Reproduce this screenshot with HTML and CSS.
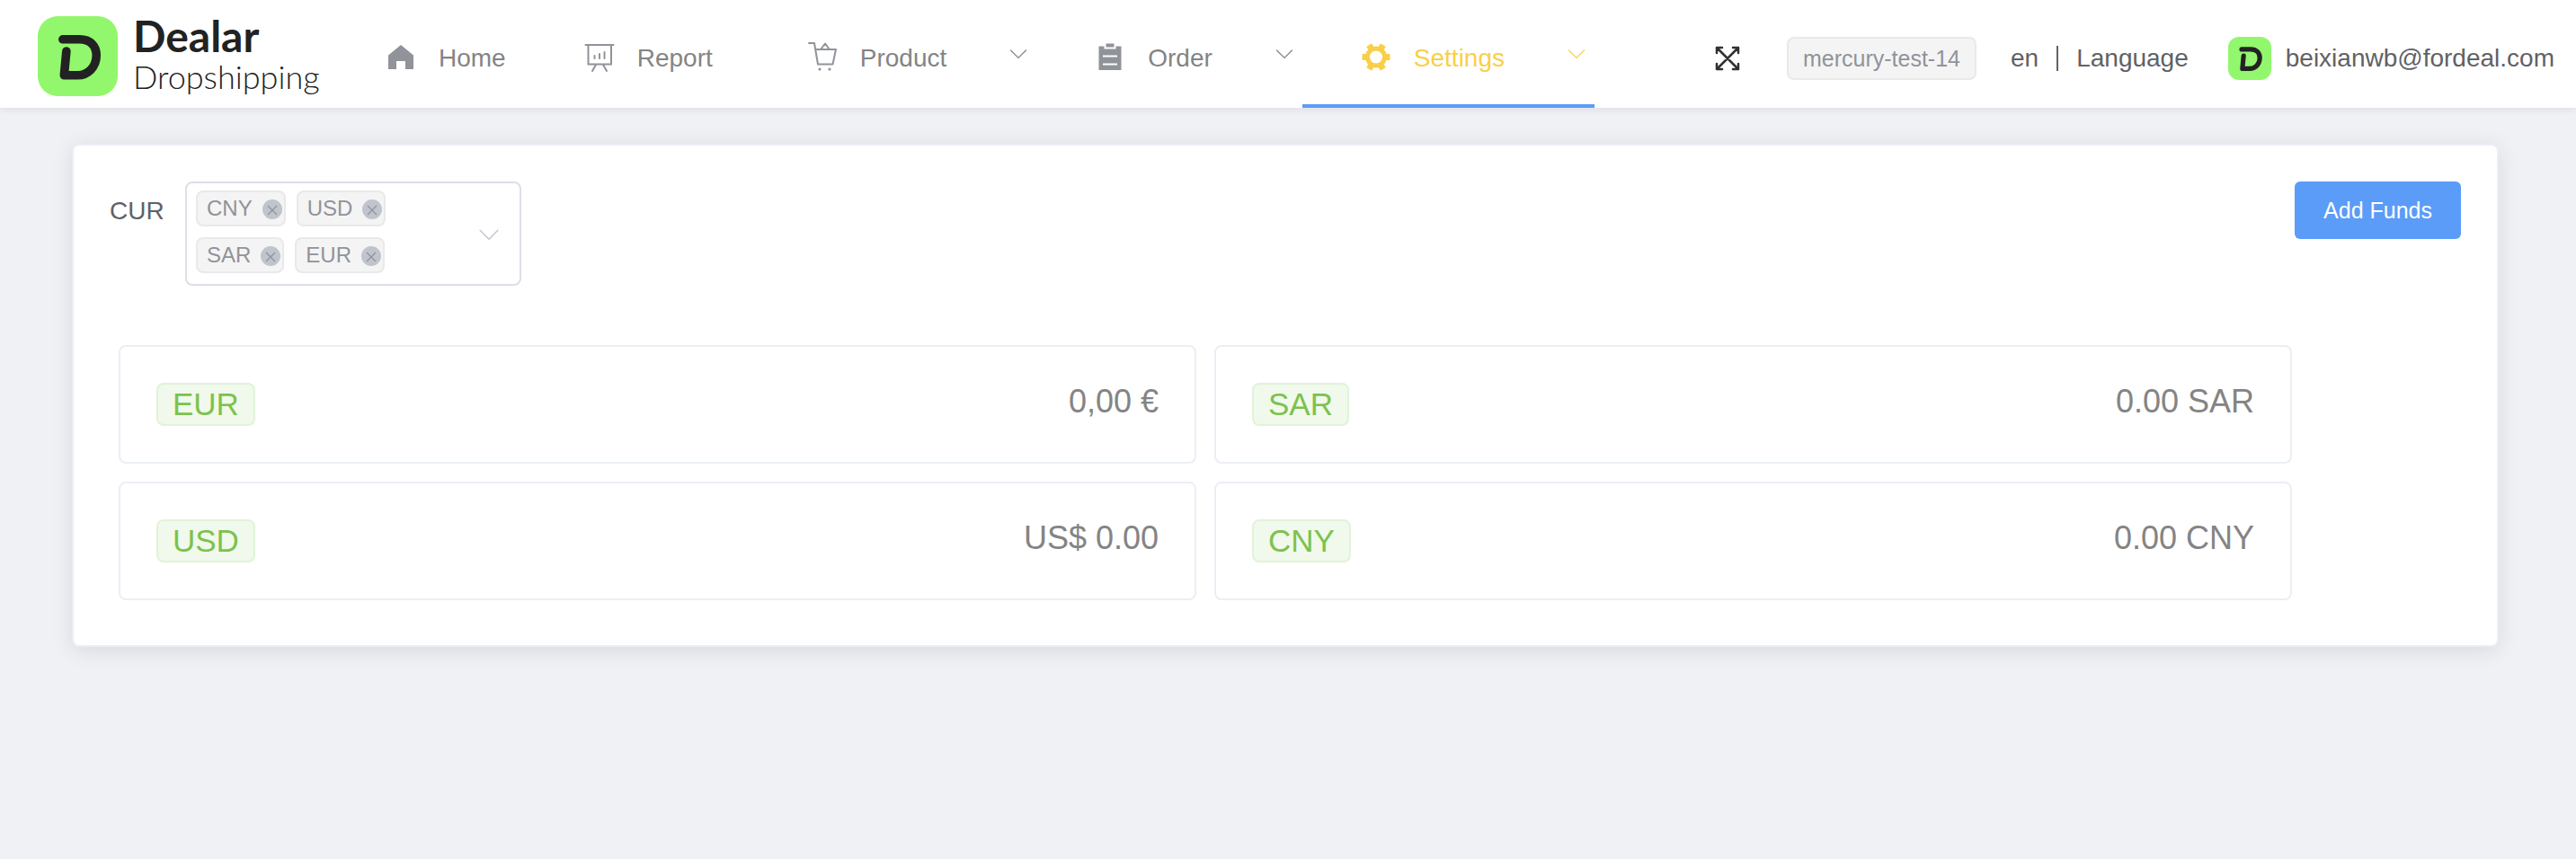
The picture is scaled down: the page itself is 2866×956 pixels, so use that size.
FILE: index.html
```html
<!DOCTYPE html>
<html lang="en">
<head>
<meta charset="utf-8">
<title>Dealar Dropshipping</title>
<link rel="stylesheet" href="styles.css">
</head>
<body>
<svg class="defs" aria-hidden="true">
  <symbol id="mark" viewBox="0 0 88 88">
    <rect width="88" height="88" rx="22" fill="#92f76c"/>
    <path d="M27.500 25.500H46C58 25.500 64.500 33 64.500 43C64.500 56 55 65 44 65H29L31.500 38.500" fill="none" stroke="#222" stroke-width="9.500" stroke-linecap="round" stroke-linejoin="round"/>
  </symbol>
  <symbol id="chevron" viewBox="0 0 24 24">
    <path d="M3.500 8L12 16.500L20.500 8" fill="none" stroke="currentColor" stroke-width="1.200" stroke-linecap="round"/>
  </symbol>
  <symbol id="close" viewBox="0 0 22 22">
    <circle cx="11" cy="11" r="11" fill="#c0c4cc"/>
    <path d="M6 7L16 17M16 7L6 17" stroke="#909399" stroke-width="1.200"/>
  </symbol>
</svg>

<header class="header">
  <a class="brand" href="#">
    <svg class="brand-mark"><use href="#mark"/></svg>
    <span class="brand-text"><span class="brand-name">Dealar</span><span class="brand-sub">Dropshipping</span></span>
  </a>
  <nav class="menu">
    <a class="item" href="#">
      <svg class="icon" viewBox="0 0 48 36"><path d="M24 4L38 15.500V31H29V22H19V31H10V15.500Z" fill="currentColor"/></svg>
      <span>Home</span>
    </a>
    <a class="item" href="#">
      <svg class="icon" viewBox="0 0 48 36" fill="none" stroke="currentColor" stroke-width="2" stroke-linecap="round"><path d="M8.500 4H39.500M11.500 4V25.500H37V4M20 26L16 33M28 26L32 33M18.500 16V19M24 14V19M29.500 12V19"/></svg>
      <span>Report</span>
    </a>
    <button class="item sub" type="button">
      <svg class="icon" viewBox="0 0 48 36" fill="none" stroke="currentColor" stroke-width="2" stroke-linecap="round" stroke-linejoin="round"><path d="M9 2H15L19 25.500H35.500L39 9H16.500M22.500 8.500L27 2.500L31.500 8.500"/><circle cx="21" cy="31" r="1.600" fill="currentColor" stroke="none"/><circle cx="32" cy="31" r="1.600" fill="currentColor" stroke="none"/></svg>
      <span>Product</span>
      <svg class="arrow"><use href="#chevron"/></svg>
    </button>
    <button class="item sub" type="button">
      <svg class="icon" viewBox="0 0 48 36"><path d="M11.500 5.500H17.500V8.500H30.500V5.500H36.500V32H11.500Z" fill="currentColor"/><path d="M19.500 2.500H28.500V6.500H19.500Z" fill="currentColor"/><path d="M16 16.500H32M16 25.500H32" stroke="#fff" stroke-width="2"/></svg>
      <span>Order</span>
      <svg class="arrow"><use href="#chevron"/></svg>
    </button>
    <button class="item sub active" type="button">
      <svg class="icon" viewBox="0 0 48 36"><g fill="currentColor"><rect x="20.500" y="2" width="7" height="31" rx="1" transform="rotate(30 24 17.500)"/><rect x="20.500" y="2" width="7" height="31" rx="1" transform="rotate(90 24 17.500)"/><rect x="20.500" y="2" width="7" height="31" rx="1" transform="rotate(150 24 17.500)"/><circle cx="24" cy="17.500" r="12"/></g><circle cx="24" cy="17.500" r="7" fill="#fff"/></svg>
      <span>Settings</span>
      <svg class="arrow"><use href="#chevron"/></svg>
    </button>
  </nav>
  <div class="tools">
    <button class="expand" type="button" aria-label="Full screen">
      <svg viewBox="0 0 28 28" fill="none" stroke="#303133" stroke-width="2.500" stroke-linecap="round" stroke-linejoin="round"><path d="M2 2L26 26M26 2L2 26M2 8V2H8M20 2H26V8M26 20V26H20M8 26H2V20"/></svg>
    </button>
    <span class="env">mercury-test-14</span>
    <button class="lang" type="button"><span>en</span><span class="bar"></span><span>Language</span></button>
    <a class="user" href="#"><svg class="avatar"><use href="#mark"/></svg><span>beixianwb@fordeal.com</span></a>
  </div>
</header>

<main class="card">
  <div class="filter">
    <span class="label" id="cur-label">CUR</span>
    <div class="select" role="group" aria-labelledby="cur-label">
      <div class="tags">
        <span class="tag">CNY<button type="button" aria-label="Remove CNY"><svg><use href="#close"/></svg></button></span>
        <span class="tag">USD<button type="button" aria-label="Remove USD"><svg><use href="#close"/></svg></button></span>
        <span class="tag">SAR<button type="button" aria-label="Remove SAR"><svg><use href="#close"/></svg></button></span>
        <span class="tag">EUR<button type="button" aria-label="Remove EUR"><svg><use href="#close"/></svg></button></span>
      </div>
      <button class="open" type="button" aria-label="Open currency list"><svg><use href="#chevron"/></svg></button>
    </div>
    <button class="primary" type="button">Add Funds</button>
  </div>
  <section class="wallets">
    <article class="wallet"><span class="code">EUR</span><span class="amount">0,00 €</span></article>
    <article class="wallet"><span class="code">SAR</span><span class="amount">0.00 SAR</span></article>
    <article class="wallet"><span class="code">USD</span><span class="amount">US$ 0.00</span></article>
    <article class="wallet"><span class="code">CNY</span><span class="amount">0.00 CNY</span></article>
  </section>
</main>
</body>
</html>
```

FILE: styles.css
```css
* { box-sizing: border-box; }
body {
  margin: 0;
  min-height: 100vh;
  background: #f0f1f5;
  color: #606266;
  font: 28px/36px "Liberation Sans", Arial, sans-serif;
}
a { color: inherit; text-decoration: none; }
button {
  margin: 0;
  padding: 0;
  border: 0;
  background: none;
  color: inherit;
  font: inherit;
  cursor: pointer;
}
svg { display: block; }
.defs { position: absolute; width: 0; height: 0; }

.header {
  display: flex;
  height: 120px;
  padding: 0 24px 0 42px;
  background: #fff;
  box-shadow: 0 2px 8px rgba(0, 21, 41, 0.08);
}
.brand {
  display: flex;
  flex: none;
  align-items: center;
  gap: 17px;
  width: 340px;
  padding-top: 4px;
  color: #222;
}
.brand-mark { flex: none; width: 89px; height: 89px; }
.brand-text { display: flex; flex-direction: column; font-family: Lato, sans-serif; }
.brand-name { font-size: 48px; line-height: 46px; font-weight: 700; }
.brand-sub { font-size: 36px; line-height: 44px; font-weight: 300; }

.menu { display: flex; color: #848484; }
.item {
  display: flex;
  align-items: center;
  padding: 16px 40px 4px;
  border-bottom: 4px solid transparent;
  white-space: nowrap;
}
.item.sub { padding-right: 8px; padding-left: 58px; }
.item.active { border-color: #5a9cf8; color: #f9cf48; }
.icon { width: 48px; height: 36px; margin-right: 18px; color: #909399; }
.item span { padding-top: 2px; }
.active .icon { color: inherit; }
.arrow { width: 24px; height: 24px; margin: 0 0 8px 68px; }

.tools { display: flex; align-items: center; margin-left: auto; padding-top: 10px; white-space: nowrap; }
.expand svg { width: 28px; height: 28px; }
.env {
  margin: 0 38px 0 52px;
  padding: 0 16px;
  border: 2px solid #e9e9eb;
  border-radius: 8px;
  background: #f4f4f5;
  color: #909399;
  font-size: 25px;
  line-height: 44px;
}
.lang { display: flex; align-items: center; gap: 20px; }
.bar { width: 2px; height: 28px; background: #606266; }
.user { display: flex; align-items: center; gap: 16px; margin-left: 44px; }
.avatar { width: 48px; height: 48px; }

.card {
  margin: 40px 86px 0 80px;
  padding: 40px 40px 50px;
  border: 2px solid #ebeef5;
  border-radius: 8px;
  background: #fff;
  box-shadow: 0 4px 24px rgba(0, 0, 0, 0.1);
}
.filter { display: flex; align-items: flex-start; }
.label { width: 84px; line-height: 66px; }
.select {
  display: flex;
  align-items: center;
  width: 374px;
  padding: 8px 10px 12px;
  border: 2px solid #dcdfe6;
  border-radius: 8px;
}
.tags { display: flex; flex: 1; flex-wrap: wrap; gap: 12px; }
.tag {
  display: flex;
  align-items: center;
  gap: 11px;
  height: 40px;
  padding: 0 2px 0 10px;
  border: 2px solid #e9e9eb;
  border-radius: 8px;
  background: #f4f4f5;
  color: #909399;
  font-size: 24px;
  line-height: 38px;
}
.tag button { padding-top: 2px; }
.tag svg { width: 22px; height: 22px; }
.open { margin: 6px 10px 0 60px; color: #c0c4cc; }
.open svg { width: 28px; height: 28px; }
.primary {
  margin-left: auto;
  padding: 0 32px;
  border-radius: 6px;
  background: #5a9cf8;
  color: #fff;
  font-size: 25px;
  font-weight: 500;
  line-height: 64px;
}

.wallets {
  display: grid;
  grid-template-columns: 1fr 1fr;
  gap: 20px;
  margin: 66px 188px 0 10px;
}
.wallet {
  display: flex;
  justify-content: space-between;
  align-items: flex-start;
  padding: 40px;
  border: 2px solid #ebeef5;
  border-radius: 8px;
  font-size: 36px;
}
.code {
  padding: 0 16px;
  border: 2px solid #e1f3d8;
  border-radius: 8px;
  background: #f0f9eb;
  color: #7cc24e;
  font-size: 35px;
  line-height: 44px;
}
.amount { color: #848484; line-height: 42px; }
```
